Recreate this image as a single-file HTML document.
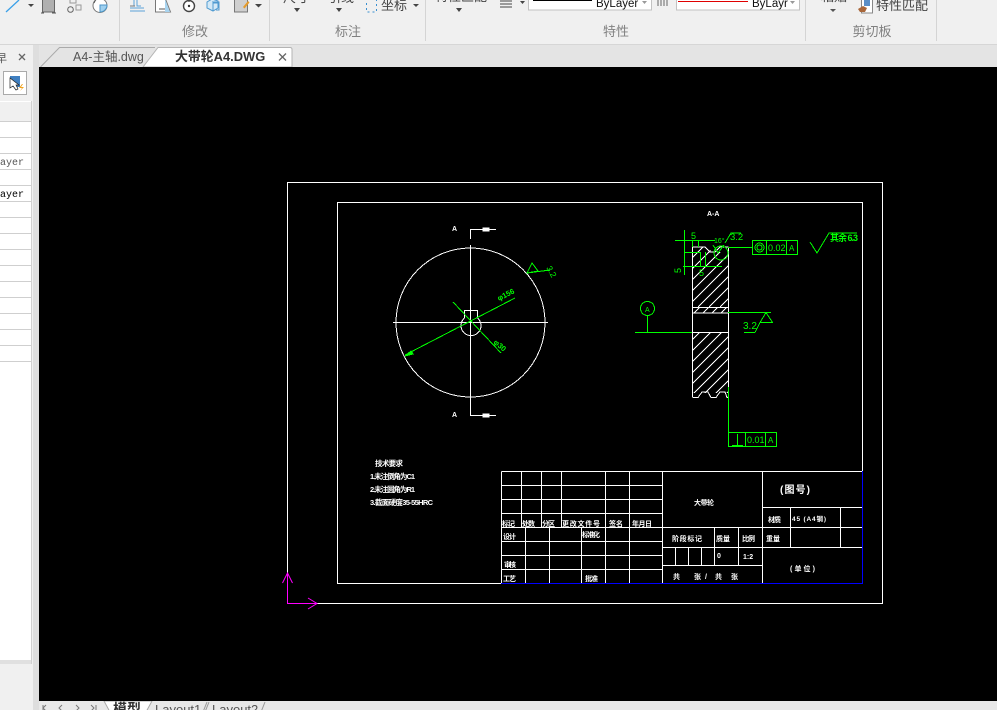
<!DOCTYPE html>
<html><head><meta charset="utf-8"><style>
html,body{margin:0;padding:0;background:#000;overflow:hidden}
svg{display:block}
text{font-family:"Liberation Sans","Noto Sans CJK SC",sans-serif}
.c text{font-size:7px;fill:#fff;font-family:"Liberation Sans","Noto Sans CJK SC",sans-serif;font-weight:700}
.g text{fill:#0f0;font-size:9px}
.w line,.w path,.w rect,.w circle{stroke:#fff;fill:none;shape-rendering:crispEdges}
.g line,.g path,.g rect,.g circle{stroke:#0f0;fill:none;shape-rendering:crispEdges}
.r{font-size:13px;fill:#808080;text-anchor:middle}
.s{stroke:#d4d4d4;stroke-width:1}
</style></head><body>
<svg width="997" height="710" viewBox="0 0 997 710" xmlns="http://www.w3.org/2000/svg">
<defs>
<clipPath id="h1"><path d="M692 247H705L713 252H724L728 247V307H692Z"/></clipPath>
<clipPath id="h2"><rect x="692" y="332" width="37" height="61"/></clipPath>
<clipPath id="h3"><rect x="692" y="307" width="37" height="6"/></clipPath>
<clipPath id="cv"><rect x="39" y="67" width="958" height="634"/></clipPath>
<clipPath id="bt"><rect x="0" y="701" width="997" height="9"/></clipPath>
</defs>
<!-- ribbon -->
<rect width="997" height="44" fill="#f0f0f0"/>
<rect y="44" width="997" height="1" fill="#d6d6d6"/>
<rect y="45" width="997" height="22" fill="#e4e4e4"/>
<g class="s"><line x1="119.5" y1="0" x2="119.5" y2="41"/><line x1="269.5" y1="0" x2="269.5" y2="41"/><line x1="425.5" y1="0" x2="425.5" y2="41"/><line x1="805.5" y1="0" x2="805.5" y2="41"/><line x1="936.5" y1="0" x2="936.5" y2="41"/></g>
<text class="r" x="195" y="36">修改</text><text class="r" x="348" y="36">标注</text><text class="r" x="616" y="36">特性</text><text class="r" x="872" y="36">剪切板</text>
<!-- draw icons -->
<path d="M6 12L19 0" stroke="#3aa0e8" stroke-width="1.3" fill="none"/>
<path d="M28 4h6l-3 3z" fill="#444"/>
<rect x="42.500" y="-1" width="12" height="13" fill="#b0b0b0" stroke="#666"/><path d="M41 13h3M52 13h4" stroke="#555"/>
<path d="M70 -1v4h6v-4M76 5h5v5h-5z" fill="none" stroke="#999"/><circle cx="70.500" cy="9.500" r="2.800" fill="none" stroke="#666"/>
<circle cx="100" cy="5.500" r="7" fill="#fff" stroke="#777"/><path d="M100 5h7a7 7 0 0 1-7 7z" fill="#9fd0ef" stroke="#4c96c8"/><path d="M96 -1l-2 4" stroke="#555"/>
<!-- modify icons -->
<path d="M130 8h14M130 11h15M137 0v6h4M134 0v6" fill="none" stroke="#5da2d8"/><path d="M130 6h5" stroke="#777"/>
<path d="M155.500 -1v13h15l-5-13" fill="#fff" stroke="#777"/><path d="M165 -1l5 13h-5z" fill="#a8d4f0"/><path d="M159 9h6" stroke="#555"/>
<circle cx="189" cy="6" r="5.500" fill="#fff" stroke="#444" stroke-width="1.400"/><circle cx="189" cy="6" r="1.200" fill="#333"/><path d="M189 -1v3" stroke="#444"/>
<path d="M207 2l5-3 6 2v7l-5 3-6-3zM213 3v8M218 3h-5" fill="#d3e9f7" stroke="#4f9ad0"/><path d="M212 2h7v8h-3" fill="none" stroke="#4f9ad0"/>
<rect x="234.500" y="-1" width="13" height="13" fill="#cfcfcf" stroke="#777"/><path d="M243 7l5-6 1.500 1.500-5 6z" fill="#e59b2b"/>
<path d="M255 4h7l-3.500 3.500z" fill="#444"/>
<!-- annotation -->
<text x="283" y="2" font-size="13" fill="#444">尺寸</text><text x="328" y="2" font-size="13" fill="#444">引线</text>
<path d="M294 8h6l-3 4zM336 8h6l-3 4z" fill="#444"/>
<rect x="366.500" y="-1" width="10" height="13" fill="none" stroke="#3a8fd0" stroke-dasharray="2 3"/>
<text x="381" y="10" font-size="13" fill="#444">坐标</text><path d="M413 4h6l-3 3z" fill="#444"/>
<text x="435" y="1" font-size="13" fill="#444">特性匹配</text><path d="M456 8h6l-3 4z" fill="#444"/>
<path d="M500 1h12M500 4h12M500 7h12" stroke="#444"/><path d="M520 1h5l-2.500 3z" fill="#444"/>
<!-- dropdowns -->
<rect x="528.500" y="-2" width="123" height="12" fill="#fff" stroke="#c2c2c2"/>
<rect x="533" y="0" width="59" height="1" fill="#000"/>
<text x="596" y="7" font-size="11.500" fill="#111">ByLayer</text><path d="M642 1h5l-2.500 3z" fill="#999"/>
<path d="M657 1h11M657 3h11M657 5h11" stroke="#666" stroke-dasharray="2 1"/>
<rect x="676.500" y="-2" width="123" height="12" fill="#fff" stroke="#c2c2c2"/>
<rect x="678" y="1" width="70" height="1" fill="#e00000"/>
<text x="752" y="7" font-size="11.500" fill="#111">ByLayr</text><path d="M790 1h5l-2.500 3z" fill="#999"/>
<!-- clipboard -->
<text x="821" y="1" font-size="13" fill="#444">粘贴</text><path d="M830 9h6l-3 3z" fill="#555"/>
<rect x="861.500" y="-2" width="11" height="15" fill="#fff" stroke="#888"/><rect x="864" y="-1" width="6" height="7" fill="#5a8fc8"/><path d="M858 9l5-3 4 2-2 4h-5z" fill="#a9673a"/>
<text x="876" y="10" font-size="13" fill="#444">特性匹配</text>
<!-- document tabs -->
<path d="M40.500 67L59.500 47.500H155" fill="none" stroke="#aaa"/>
<text x="73" y="61" font-size="12.500" fill="#555">A4-主轴.dwg</text>
<path d="M143 67L158 47.500H290q2 0 2 2V67Z" fill="#fff" stroke="#b4b4b4"/>
<text x="175" y="61" font-size="12.900" font-weight="700" fill="#333">大带轮A4.DWG</text>
<path d="M279 53.500l7 7M286 53.500l-7 7" stroke="#666" stroke-width="1.300"/>
<!-- left panel -->
<rect x="0" y="45" width="39" height="665" fill="#f0f0f0"/>
<rect x="33" y="45" width="6" height="665" fill="#dedede"/>
<text x="-4" y="62" font-size="11" fill="#555">早</text>
<path d="M19 54l6 6M25 54l-6 6" stroke="#666" stroke-width="1.300"/>
<rect x="3.500" y="71.500" width="23" height="23" fill="#fff" stroke="#aaa"/>
<rect x="10" y="76" width="10" height="11" fill="#3f7fc0"/><path d="M10 78v10l3-2 3 4 2-1-2-4h3z" fill="#fff" stroke="#222" stroke-width=".7"/><path d="M22 84l-3 4h3l-2 3 4-4h-3l2-3z" fill="#f1a31d"/>
<rect x="0" y="101" width="32" height="563" fill="#fff"/>
<rect x="31" y="101" width="1" height="563" fill="#d0d0d0"/>
<rect x="0" y="102" width="31" height="19" fill="#f0f0f0"/>
<path d="M0 121.500h31M0 137.500h31M0 153.500h31M0 169.500h31M0 185.500h31M0 201.500h31M0 217.500h31M0 233.500h31M0 249.500h31M0 265.500h31M0 281.500h31M0 297.500h31M0 313.500h31M0 329.500h31M0 345.500h31M0 361.500h31" stroke="#cfcfcf"/>
<rect x="0" y="660" width="31" height="4" fill="#e0e0e0"/>
<text x="0" y="165" style="font-family:'Liberation Mono',monospace" font-size="10" fill="#555">ayer</text>
<text x="0" y="197" style="font-family:'Liberation Mono',monospace" font-size="10" fill="#000">ayer</text>
<!-- canvas -->
<rect x="39" y="67" width="958" height="634" fill="#000"/>
<g clip-path="url(#cv)">
<g class="w">
<rect x="287.500" y="182.500" width="595" height="421"/>
<rect x="337.500" y="202.500" width="525" height="381"/>
<circle cx="470.500" cy="322.500" r="74.500"/>
<line x1="393" y1="322.500" x2="548" y2="322.500"/>
<line x1="470.500" y1="245" x2="470.500" y2="399"/>
<path d="M470.500 239V229.500H496M470.500 395V415.500H496"/>
<path d="M464.500 318V310.500H477.500V318M464.500 318A10 10 0 1 0 477.500 318"/>
<rect x="483" y="228" width="6" height="3" style="fill:#fff"/><rect x="483" y="414" width="6" height="3" style="fill:#fff"/>
<!-- section -->
<path d="M692.500 247H705L710 252H715L720 247H728.500M692.500 247V397M728.500 247V397M692.500 307.500H728.500M692.500 313H728.500M692.500 332.500H728.500"/>
<path d="M692.500 397.500H698L702 392H708L711 397.500H716L720 392H725L727 397.500H728.500"/>
<g clip-path="url(#h1)"><path d="M703 247l-60 60M714 247l-60 60M725 247l-60 60M736 247l-60 60M747 247l-60 60M758 247l-60 60M769 247l-60 60M780 247l-60 60M791 247l-60 60"/></g>
<g clip-path="url(#h3)"><path d="M700 307l-6 6M709 307l-6 6M718 307l-6 6M727 307l-6 6"/></g>
<g clip-path="url(#h2)"><path d="M700 332l-65 65M711 332l-65 65M722 332l-65 65M733 332l-65 65M744 332l-65 65M755 332l-65 65M766 332l-65 65M777 332l-65 65M788 332l-65 65"/></g>
<!-- title block -->
<path d="M501.500 471.500H862.500M501.500 485.500H662.500M501.500 499.500H662.500M501.500 513.500H662.500M501.500 527.500H762.500M501.500 541.500H662.500M501.500 555.500H662.500M501.500 569.500H662.500M662.500 547.500H862.500M662.500 565.500H762.500M762.500 507.500H862.500M762.500 527.500H862.500"/>
<path d="M501.500 471.500V583M521.500 471.500V527.500M541.500 471.500V527.500M561.500 471.500V527.500M605.500 471.500V583M629.500 471.500V583M662.500 471.500V583M525.500 527.500V583M549.500 527.500V583M581.500 527.500V583M714.500 527.500V565.500M738.500 527.500V565.500M675.500 547.500V565.500M688.500 547.500V565.500M701.500 547.500V565.500M762.500 471.500V583M790.500 507.500V547.500M840.500 507.500V547.500"/>
</g>
<path d="M501 583.500H863M862.500 471V584" stroke="#0000ff" fill="none" style="shape-rendering:crispEdges"/>
<!-- UCS -->
<path d="M287.500 574V603.500H316" stroke="#f0f" fill="none" style="shape-rendering:crispEdges"/>
<path d="M282.500 583L287.500 573L292.500 583M308 598L317 603.500L308 609" stroke="#f0f" fill="none"/>
<!-- white text -->
<g class="c">
<text x="452" y="231">A</text><text x="452" y="417">A</text>
<text x="707" y="216">A-A</text>
<text x="375" y="466" style="font-size:7.500px" textLength="28">技术要求</text>
<text x="370" y="479" style="font-size:7.500px" textLength="45">1.未注倒角为C1</text>
<text x="370" y="492" style="font-size:7.500px" textLength="45">2.未注圆角为R1</text>
<text x="370" y="505" style="font-size:7.500px" textLength="63">3.截面硬度35-55HRC</text>
<text x="502" y="526" textLength="13">标记</text><text x="522" y="526" textLength="13">处数</text><text x="542" y="526" textLength="13">分区</text><text x="562" y="526" textLength="38">更改文件号</text><text x="609" y="526" textLength="14">签名</text><text x="632" y="526" textLength="20">年月日</text>
<text x="503" y="539" textLength="13">设计</text><text x="582" y="537" textLength="18">标准化</text><text x="504" y="567" textLength="12">审核</text><text x="503" y="581" textLength="13">工艺</text><text x="585" y="581" textLength="13">批准</text>
<text x="694" y="505" textLength="20">大带轮</text>
<text x="780" y="493" style="font-size:10px" textLength="30">(图号)</text>
<text x="768" y="522" textLength="13">材质</text><text x="792" y="521" style="font-size:6.500px" textLength="34">45 (A4钢)</text>
<text x="672" y="541" textLength="30">阶段标记</text><text x="716" y="541" textLength="14">质量</text><text x="742" y="541" textLength="13">比例</text><text x="766" y="541" textLength="14">重量</text>
<text x="717" y="558">0</text><text x="743" y="559">1:2</text>
<text x="673" y="579">共</text><text x="694" y="579">张</text><text x="705" y="579">/</text><text x="715" y="579">共</text><text x="731" y="579">张</text>
<text x="790" y="571" textLength="25">(单位)</text>
</g>
<!-- green -->
<g class="g">
<path d="M405 355L515 298M453 302L501 353"/>
<path d="M527 273L532 263L538 271ZM527 273L550 270"/>
<path d="M675 240.500H715M684.500 230V275M683 266.500H722M684 252.500H700M700.500 252V266M705.500 252V266M698.500 240V247M692.500 240V247M725 243L731 233H741"/>
<circle cx="721" cy="253" r="7"/><path d="M713 245L718 253L724 245"/>
<path d="M728 247.500H752M728 312.500H771M760 322.500L766 312.500L772.500 322.500H760M755 332.500L760 322.500M744 332.500H755M810 242L817 253L829 233H857"/>
<rect x="752.500" y="240.500" width="45" height="14"/><path d="M766.500 240.500V254.500M786.500 240.500V254.500"/>
<circle cx="759.500" cy="247.500" r="4.500"/><circle cx="759.500" cy="247.500" r="2.500"/>
<circle cx="647.500" cy="308.500" r="7"/><path d="M647.500 316V332.500M635 332.500H692"/>
<path d="M728.500 387V432"/>
<rect x="728.500" y="432.500" width="48" height="14"/><path d="M745.500 432.500V446.500M765.500 432.500V446.500M737.500 434V445M732 445.500H743"/>
<text x="691" y="239" style="font-size:9px">5</text>
<text x="699" y="276" style="font-size:9px">5</text>
<text transform="translate(681,273) rotate(-90)" style="font-size:9px">5</text>
<text x="714" y="243" style="font-size:7px">16°</text>
<text x="730" y="240" style="font-size:9.500px">3.2</text>
<text x="768" y="251" style="font-size:9px">0.02</text><text x="789" y="251" style="font-size:8px">A</text>
<text x="830" y="241" style="font-size:9px;font-weight:700" textLength="28">其余 6.3</text>
<text x="645" y="312" style="font-size:7px">A</text>
<text x="743" y="329" style="font-size:10px">3.2</text>
<text x="747" y="443" style="font-size:9px">0.01</text><text x="768" y="443" style="font-size:8px">A</text>
<text transform="translate(499,301) rotate(-27)" style="font-size:7.500px;font-weight:700">φ156</text>
<text transform="translate(493,343) rotate(40)" style="font-size:7.500px;font-weight:700">φ30</text>
<text transform="translate(546,268) rotate(60)" style="font-size:8.500px">3.2</text>
<path d="M405 356l8-2-2-3z" style="fill:#0f0"/>
</g>
</g>
<!-- bottom tabs -->
<rect x="39" y="701" width="958" height="9" fill="#e8e8e8"/>
<g clip-path="url(#bt)">
<path d="M43 705v5M46 705l-3 3 3 3M62 705l-3 3 3 3M76 705l3 3-3 3M91 705l3 3-3 3M96 705v5" stroke="#777" fill="none"/>
<path d="M104 701L110 712H146L152 701Z" fill="#fff" stroke="#aaa"/>
<text x="113" y="714" font-size="14" font-weight="700" fill="#333">模型</text>
<text x="155" y="714" font-size="13" fill="#555">Layout1</text>
<text x="212" y="714" font-size="13" fill="#555">Layout2</text>
<path d="M203 712L207 702M205 712L209 702M261 712L265 702" stroke="#999" fill="none"/>
</g>
</svg>
</body></html>
